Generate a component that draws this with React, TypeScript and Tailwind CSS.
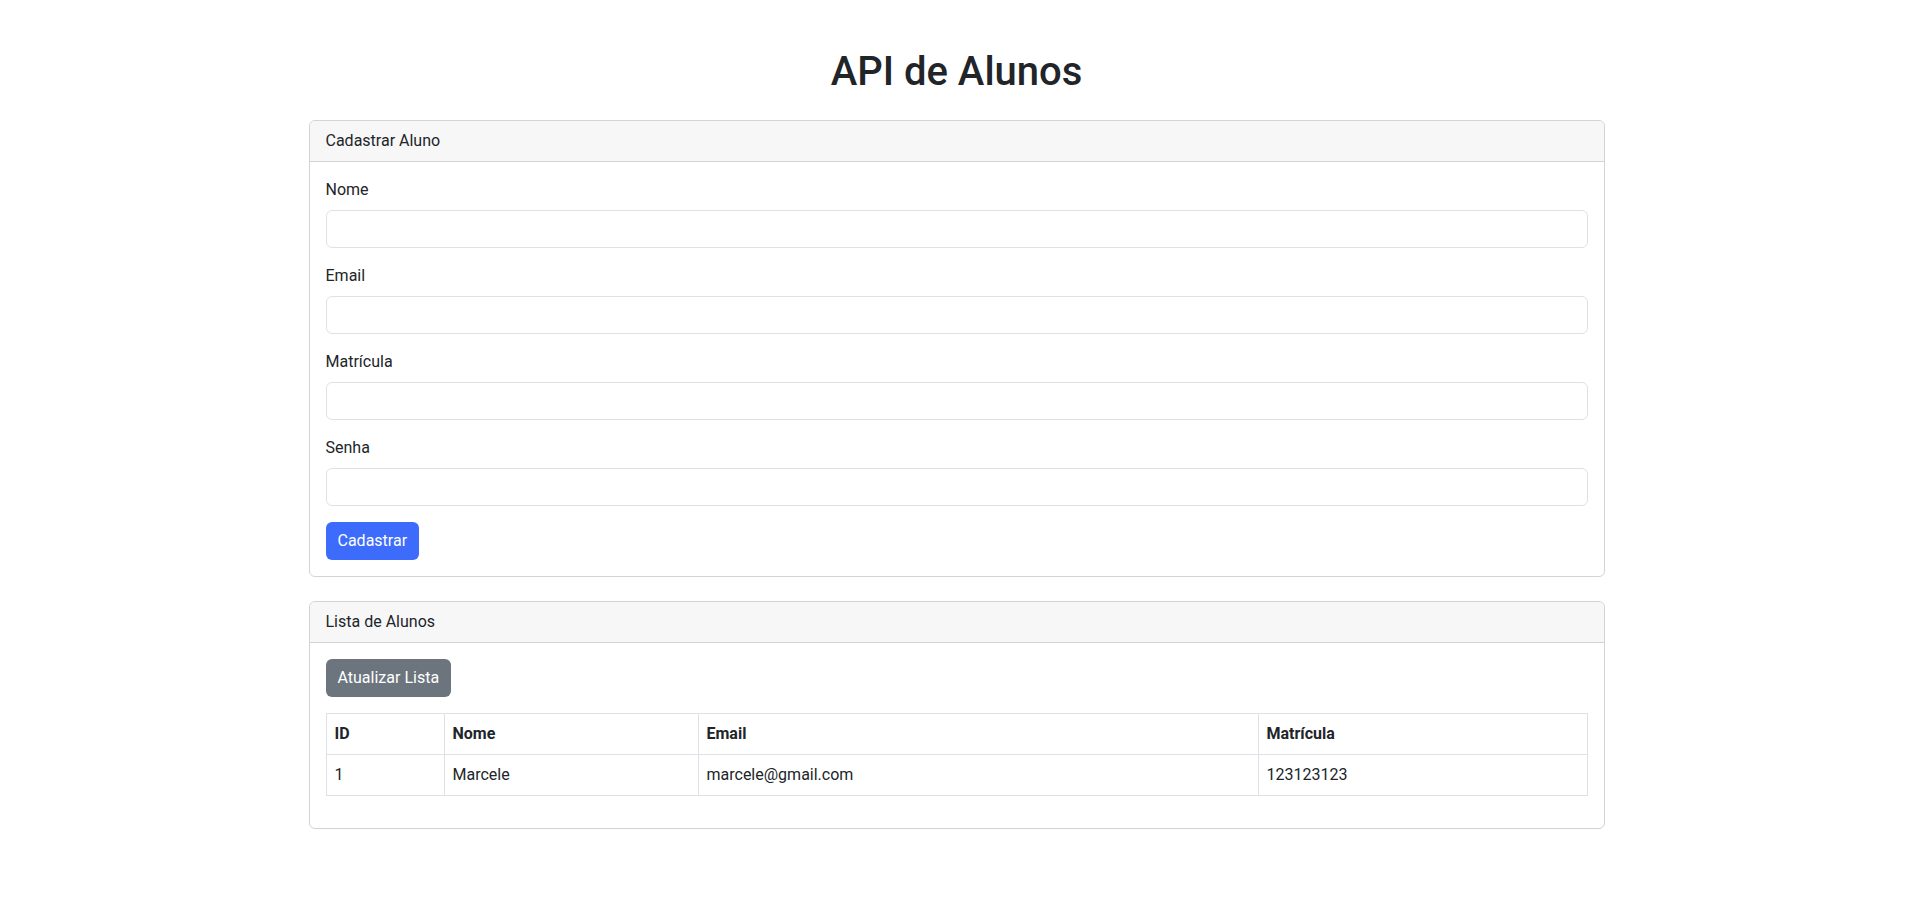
import React from "react";

const font = "font-['Roboto','Noto_Sans',sans-serif]";

function Field({ label, type = "text" }: { label: string; type?: string }) {
  return (
    <div className="mb-4">
      <label className="mb-2 block text-base leading-6">{label}</label>
      <input
        type={type}
        className="block h-[38px] w-full rounded-md border border-[#dee2e6] bg-white px-3 py-1.5 text-base leading-6 outline-none"
      />
    </div>
  );
}

export default function App() {
  return (
    <div className={`min-h-[908px] bg-white pl-[7px] text-[#212529] ${font}`}>
      <div className="mx-auto w-[1296px] pt-12">
        <h1 className="mb-6 text-center text-[40px] font-medium leading-[48px]">API de Alunos</h1>

        <div className="mb-6 rounded-md border border-[#d3d3d4]">
          <div className="rounded-t-md border-b border-[#d3d3d4] bg-[#f7f7f7] px-4 py-2 text-base leading-6">
            Cadastrar Aluno
          </div>
          <div className="p-4">
            <Field label="Nome" />
            <Field label="Email" type="email" />
            <Field label="Matrícula" />
            <Field label="Senha" type="password" />
            <button className="h-[38px] rounded-md bg-[#3d6cfd] px-3 text-base leading-6 text-white">
              Cadastrar
            </button>
          </div>
        </div>

        <div className="mb-6 rounded-md border border-[#d3d3d4]">
          <div className="rounded-t-md border-b border-[#d3d3d4] bg-[#f7f7f7] px-4 py-2 text-base leading-6">
            Lista de Alunos
          </div>
          <div className="p-4">
            <button className="mb-4 h-[38px] rounded-md bg-[#6c757d] px-3 text-base leading-6 text-white">
              Atualizar Lista
            </button>
            <table className="mb-4 w-full border-collapse text-left text-base leading-6">
              <thead>
                <tr>
                  <th className="w-[118px] border border-[#dee2e6] px-2 py-2 font-bold">ID</th>
                  <th className="w-[254px] border border-[#dee2e6] px-2 py-2 font-bold">Nome</th>
                  <th className="w-[560px] border border-[#dee2e6] px-2 py-2 font-bold">Email</th>
                  <th className="border border-[#dee2e6] px-2 py-2 font-bold">Matrícula</th>
                </tr>
              </thead>
              <tbody>
                <tr>
                  <td className="border border-[#dee2e6] px-2 py-2">1</td>
                  <td className="border border-[#dee2e6] px-2 py-2">Marcele</td>
                  <td className="border border-[#dee2e6] px-2 py-2">marcele@gmail.com</td>
                  <td className="border border-[#dee2e6] px-2 py-2">123123123</td>
                </tr>
              </tbody>
            </table>
          </div>
        </div>
      </div>
    </div>
  );
}
